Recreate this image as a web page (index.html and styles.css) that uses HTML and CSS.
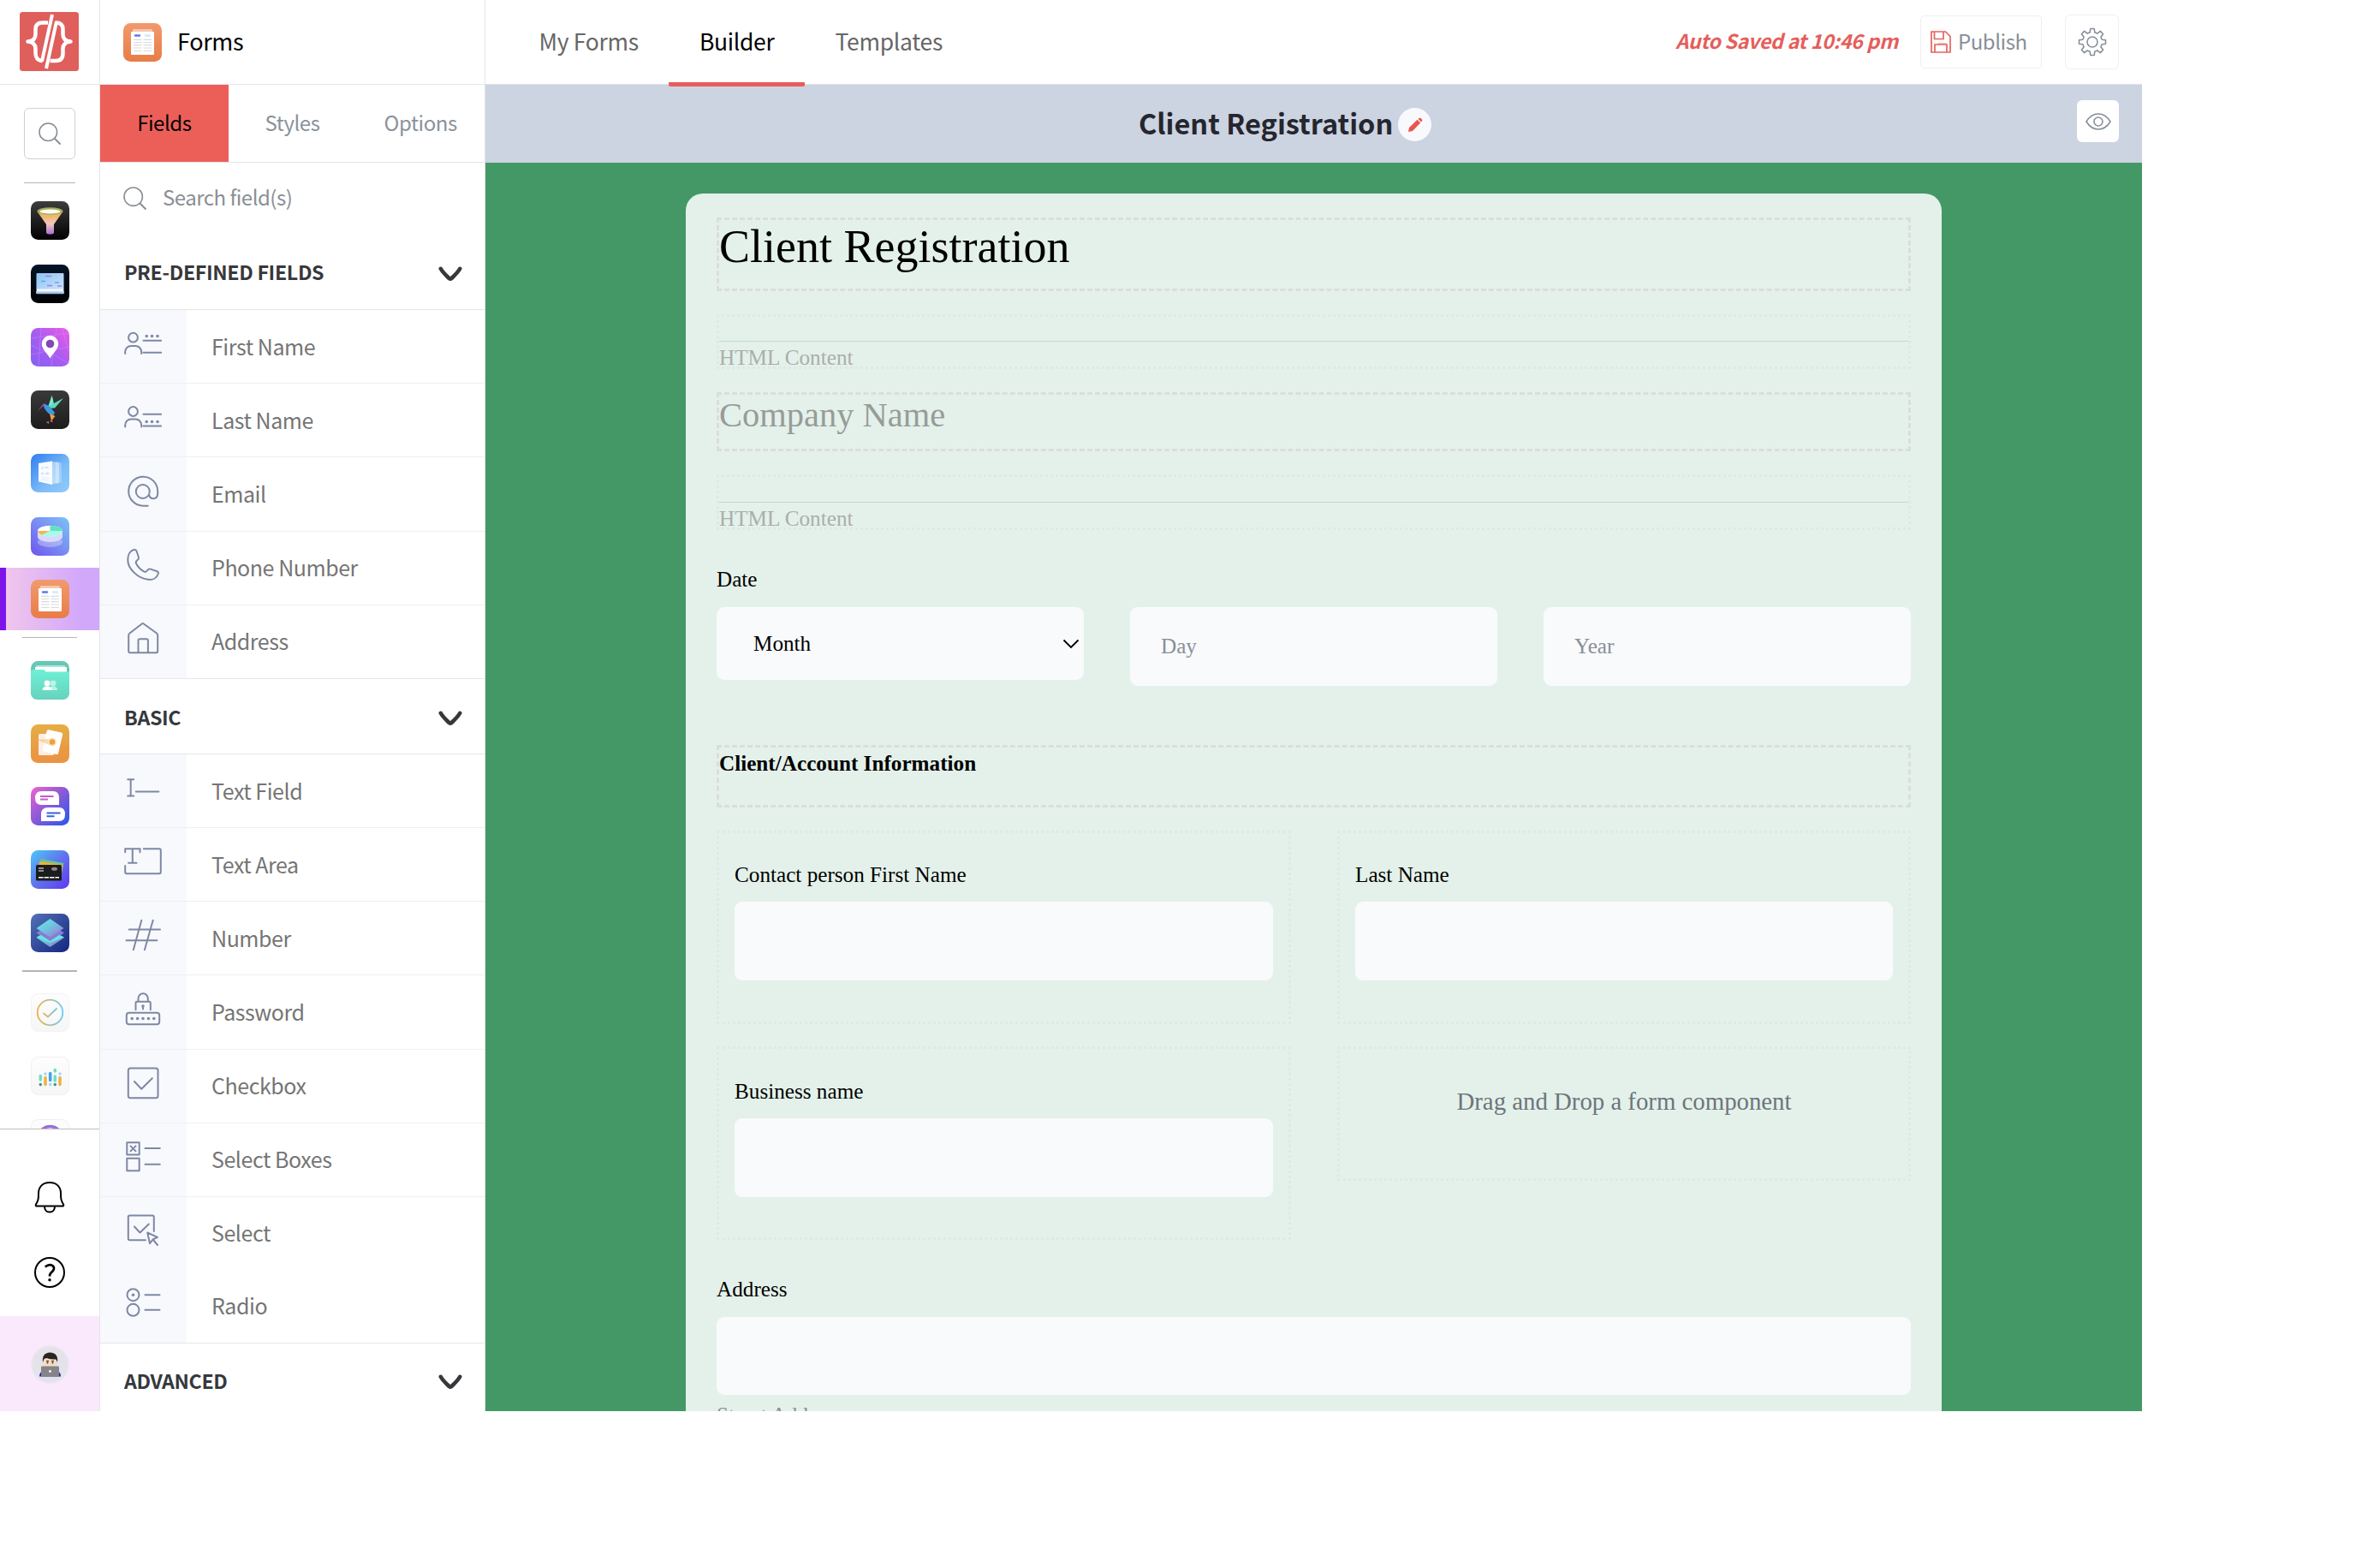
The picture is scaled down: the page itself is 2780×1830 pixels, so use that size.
FILE: index.html
```html
<!DOCTYPE html>
<html lang="en">
<head>
<meta charset="utf-8">
<title>Forms – Builder</title>
<link rel="stylesheet" href="styles.css">
</head>
<body>
<svg class="defs" width="0" height="0" aria-hidden="true">
  <defs>
    <linearGradient id="g-black" x1="0" y1="0" x2="0" y2="1"><stop offset="0" stop-color="#3d3d3d"/><stop offset="1" stop-color="#000"/></linearGradient>
    <linearGradient id="g-funnel" x1="0" y1="0" x2="0" y2="1"><stop offset="0" stop-color="#eab043"/><stop offset=".55" stop-color="#f3c6bd"/><stop offset="1" stop-color="#a86fd6"/></linearGradient>
    <linearGradient id="g-night" x1="0" y1="0" x2="0" y2="1"><stop offset="0" stop-color="#031427"/><stop offset="1" stop-color="#000"/></linearGradient>
    <linearGradient id="g-screen" x1="0" y1="0" x2="1" y2="1"><stop offset="0" stop-color="#8cc4f5"/><stop offset="1" stop-color="#cfe2fa"/></linearGradient>
    <linearGradient id="g-pin" x1="0" y1="1" x2="1" y2="0"><stop offset="0" stop-color="#8560f5"/><stop offset=".5" stop-color="#a95cf0"/><stop offset="1" stop-color="#ef5be6"/></linearGradient>
    <linearGradient id="g-bird" x1="0" y1="0" x2="0" y2="1"><stop offset="0" stop-color="#3a3a3a"/><stop offset="1" stop-color="#1c1c1c"/></linearGradient>
    <linearGradient id="g-doc" x1="0" y1="0" x2="1" y2="1"><stop offset="0" stop-color="#2f7df0"/><stop offset=".6" stop-color="#7cbcf7"/><stop offset="1" stop-color="#90cbfa"/></linearGradient>
    <linearGradient id="g-pie" x1="0" y1="1" x2="1" y2="0"><stop offset="0" stop-color="#6d55ee"/><stop offset=".5" stop-color="#7b8cf2"/><stop offset="1" stop-color="#79c5f7"/></linearGradient>
    <linearGradient id="g-orange" x1="0" y1="0" x2="0" y2="1"><stop offset="0" stop-color="#f19a6e"/><stop offset="1" stop-color="#e87c46"/></linearGradient>
    <linearGradient id="g-mint" x1="0" y1="0" x2="0" y2="1"><stop offset="0" stop-color="#6ff0d6"/><stop offset="1" stop-color="#66d2bd"/></linearGradient>
    <linearGradient id="g-amber" x1="0" y1="0" x2="0" y2="1"><stop offset="0" stop-color="#e5ae45"/><stop offset="1" stop-color="#eb9148"/></linearGradient>
    <linearGradient id="g-chat" x1="0" y1="0" x2="1" y2="1"><stop offset="0" stop-color="#f062d3"/><stop offset=".4" stop-color="#9a5bd6"/><stop offset="1" stop-color="#2358ea"/></linearGradient>
    <linearGradient id="g-wallet" x1="0" y1="0" x2="1" y2="1"><stop offset="0" stop-color="#4fc6f7"/><stop offset=".5" stop-color="#5f74ee"/><stop offset="1" stop-color="#5f38ee"/></linearGradient>
    <linearGradient id="g-navy" x1="0" y1="0" x2="1" y2="1"><stop offset="0" stop-color="#5571b8"/><stop offset="1" stop-color="#13267f"/></linearGradient>
    <linearGradient id="g-layer" x1="0" y1="0" x2="1" y2="1"><stop offset="0" stop-color="#62f0df"/><stop offset=".5" stop-color="#71bfe0"/><stop offset="1" stop-color="#a667d0"/></linearGradient>
    <linearGradient id="g-check" x1="0" y1="0" x2="1" y2="0"><stop offset="0" stop-color="#ecb44a"/><stop offset="1" stop-color="#6ccbf3"/></linearGradient>
    <linearGradient id="g-tile" x1="0" y1="0" x2="0" y2="1"><stop offset="0" stop-color="#fdfdfd"/><stop offset="1" stop-color="#f6f6f6"/></linearGradient>
    <symbol id="i-forms" viewBox="0 0 45 45">
      <rect width="45" height="45" rx="8.5" fill="url(#g-orange)"/>
      <rect x="11" y="7" width="23" height="5" rx="1" fill="#f7c7ae"/>
      <rect x="9" y="10" width="27" height="27" rx="1" fill="#fff"/>
      <path d="M14 14.5h5" stroke="#5b7bea" stroke-width="2.4" stroke-linecap="round"/><path d="M26 14.5h5" stroke="#cdebfb" stroke-width="2.4" stroke-linecap="round"/>
      <path d="M12 19.3h9.5M23.5 19.3h9.5M12 22.5h9.5M23.5 22.5h9.5M12 25.7h9.5M23.5 25.7h9.5M12 29h9.5M23.5 29h9.5M12 32.5h9.5M23.5 32.5h9.5" stroke="#d9dade" stroke-width="1.2"/>
    </symbol>
    <symbol id="i-search" viewBox="0 0 28 28">
      <circle cx="11.7" cy="11.7" r="10.7" fill="none" stroke="currentColor" stroke-width="1.6"/><path d="M19.3 19.3L26.5 26.5" stroke="currentColor" stroke-width="2"/>
    </symbol>
    <symbol id="i-chevron" viewBox="0 0 28 18">
      <path d="M2.800 2.800C5 7 9 10.500 12.500 14Q14 15.200 15.500 14C19 10.500 23 7 25.200 2.800" fill="none" stroke="currentColor" stroke-width="4.600" stroke-linecap="round" stroke-linejoin="round"/>
    </symbol>
  </defs>
</svg>

<div class="app">
  <aside class="rail">
    <div class="rail-logo">
      <svg width="69" height="69" viewBox="0 0 69 69"><rect width="69" height="69" rx="3.5" fill="#df5f5c"/>
        <g fill="none" stroke="#fff" stroke-width="4.5" stroke-linejoin="round"><path d="M33 12.500H27C21 12.500 18.500 15 18.500 20V26C18.500 31 15.500 34 9.500 34.500C15.500 35 18.500 38 18.500 43V48C18.500 53 21 57 26.500 57"/><path d="M42 12.500C48 12.500 50.500 15 50.500 20V26C50.500 31 53.500 34 59.500 34.500C53.500 35 50.500 38 50.500 43V48C50.500 54 48 57 42.500 57H35.500"/><path d="M38 3L26 57.500M43 11L31 66" stroke-width="4"/></g></svg>
    </div>
    <div class="rail-scroll">
      <div class="rail-search"><svg width="27" height="27"><use href="#i-search"/></svg></div>
      <div class="rail-rule"></div>
      <nav class="rail-apps">
        <a class="rail-item"><svg width="45" height="45" viewBox="0 0 45 45"><rect width="45" height="45" rx="8.500" fill="url(#g-black)"/><path d="M7.500 12L18 27v9.500a4.500 2 0 0 0 9 0V27L37.500 12z" fill="url(#g-funnel)"/><ellipse cx="22.500" cy="11.500" rx="15" ry="4.300" fill="#9fae62"/><ellipse cx="22.500" cy="12" rx="12" ry="2.500" fill="#fffbe8"/></svg></a>
        <a class="rail-item"><svg width="45" height="45" viewBox="0 0 45 45"><rect width="45" height="45" rx="8.500" fill="url(#g-night)"/><rect x="6.500" y="10" width="32" height="20" rx="1" fill="url(#g-screen)"/><path d="M17 13.500h7M19 24.500h6M31 25h5" stroke="#9289de" stroke-width="1.400"/><path d="M12 19.500h5M28 21h5" stroke="#55aeea" stroke-width="1.500"/><path d="M7 28.500h31l1 4.500H6z" fill="#f2f6fc"/><rect x="6" y="31.500" width="33" height="2.700" rx="1.200" fill="#a8c4e6"/></svg></a>
        <a class="rail-item"><svg width="45" height="45" viewBox="0 0 45 45"><rect width="45" height="45" rx="8.500" fill="url(#g-pin)"/><path d="M0 12L45 6M12 0L9 45M0 31L45 22M30 0L24 45M22 28L45 42M36 0L45 28M0 20L22 30" stroke="#c68af7" stroke-opacity=".55" fill="none"/><path d="M22.500 35.500C18 28 12.800 24.500 12.800 18.500a9.700 9.700 0 0 1 19.400 0C32.200 24.500 27 28 22.500 35.500z" fill="#fff"/><circle cx="22.500" cy="18.500" r="4.800" fill="#8247b8"/></svg></a>
        <a class="rail-item"><svg width="45" height="45" viewBox="0 0 45 45"><rect width="45" height="45" rx="8.500" fill="url(#g-bird)"/><path d="M24.500 5.500L27 15L38 9L28 20.500L19.500 21z" fill="#5fd9bd"/><path d="M26 14L20 20.500L25 7z" fill="#7fe8d0"/><path d="M8 24L13 17.500Q16 13.500 18.500 17L14 18.500z" fill="#9e4fb5"/><path d="M15 17Q20 15.500 24 21L28 26L26.500 29Q20 28.500 15.500 20z" fill="#3d9ae0"/><path d="M22 27L28.500 30L24 35.500z" fill="#f4a13c"/><path d="M22 36l3-2 .5 3zM18 37l3-1v3z" fill="#ee6668"/></svg></a>
        <a class="rail-item"><svg width="45" height="45" viewBox="0 0 45 45"><rect width="45" height="45" rx="8.500" fill="url(#g-doc)"/><path d="M29 9.500l7 1v23l-7 1.500z" fill="#fff" opacity=".25"/><path d="M24 9l9 1v24l-9 1.500z" fill="#fff" opacity=".45"/><path d="M9 11L25 8.500V36L9 32.500z" fill="#f8fbff"/><path d="M12 16.500h3M16.500 16h4M12 23h3M17 23h4" stroke="#cfe2f8" stroke-width="2.200"/><path d="M12 27.500l9 1M12 30l9 1" stroke="#e4eefa"/></svg></a>
        <a class="rail-item"><svg width="45" height="45" viewBox="0 0 45 45"><rect width="45" height="45" rx="8.500" fill="url(#g-pie)"/><path d="M8 27v2a14.500 6 0 0 0 29 0v-2z" fill="#fff" opacity=".3"/><path d="M8 18v5a14.500 6 0 0 0 29 0v-5z" fill="#d9dafb"/><ellipse cx="22.500" cy="16" rx="14.500" ry="6.300" fill="#fff"/><path d="M22.500 16V9.700A14.500 6.300 0 0 1 37 16z" fill="#64e0bf"/><path d="M22.500 16H37A14.500 6.300 0 0 1 13 20.700z" fill="#a5fbe9"/><path d="M22.500 16H8Q8.500 19 13 20.700z" fill="#eabb55"/></svg></a>
        <a class="rail-item rail-item-active"><svg width="45" height="45"><use href="#i-forms"/></svg></a>
      </nav>
      <div class="rail-rule rail-rule-wide"></div>
      <nav class="rail-apps">
        <a class="rail-item"><svg width="45" height="45" viewBox="0 0 45 45"><rect width="45" height="45" rx="8.500" fill="#68c6b4"/><path d="M6 5h34v8H6z" fill="#aee6da"/><path d="M5 8q0-1 1-1h36v7H5z" fill="#fff"/><path d="M0 13q0-3 3-3h11q3 0 3 2.500h28v24q0 8.500-8.500 8.500h-28Q0 45 0 36.500z" fill="url(#g-mint)"/><g fill="#b9f4e8"><circle cx="26" cy="26" r="3.400"/><path d="M21 34q0-4.500 5-4.500t5 4.500z"/></g><g fill="#fff"><circle cx="19" cy="26" r="3.400"/><path d="M13.500 34q0-4.500 5.500-4.500t5.500 4.500z"/></g></svg></a>
        <a class="rail-item"><svg width="45" height="45" viewBox="0 0 45 45"><rect width="45" height="45" rx="8.500" fill="url(#g-amber)"/><path d="M0 30h20V24h25v12.500q0 8.500-8.500 8.500h-28Q0 45 0 36.500z" fill="#ea963f" opacity=".45"/><rect x="9" y="11" width="18" height="25" rx="1.500" fill="#fdeee2"/><rect x="16" y="7.500" width="19" height="26" rx="2" transform="rotate(13 25 20)" fill="#fff"/><path d="M6 17.500L24 17v8z" fill="#f2b866" opacity=".5"/><circle cx="25" cy="20.500" r="5" fill="#fbe3c4"/><circle cx="25" cy="20.500" r="3.300" fill="#e9a534"/></svg></a>
        <a class="rail-item"><svg width="45" height="45" viewBox="0 0 45 45"><rect width="45" height="45" rx="8.500" fill="url(#g-chat)"/><path d="M12.500 5H26q7 0 7 8v8H12.500Q5 21 5 13T12.500 5z" fill="#fff"/><path d="M20 24h13q7 0 7 8t-7 8H12v-8q0-8 8-8z" fill="#fff"/><path d="M11 11h15.500M11 14.500h9" stroke="#c95acb" stroke-width="2"/><path d="M18.500 30.500h16M18.500 34.300h9" stroke="#3a61e0" stroke-width="2"/></svg></a>
        <a class="rail-item"><svg width="45" height="45" viewBox="0 0 45 45"><rect width="45" height="45" rx="8.500" fill="url(#g-wallet)"/><path d="M12 10L38.500 15L34 34L8 26z" fill="#6fc48e"/><path d="M10 13L37.500 17L35 34L8 27z" fill="#e8b23e"/><rect x="6" y="17" width="30" height="18.500" rx="1.500" fill="#1b1c1e"/><path d="M9 21h6M9 24h6" stroke="#fff" stroke-width="1.200"/><ellipse cx="27.500" cy="21.700" rx="3.500" ry="2" fill="#8a8a8a"/><path d="M9 31.700h24" stroke="#fff" stroke-width="1.500" stroke-dasharray="5.500 1"/></svg></a>
        <a class="rail-item"><svg width="45" height="45" viewBox="0 0 45 45"><rect width="45" height="45" rx="8.500" fill="url(#g-navy)"/><path d="M22.500 17L39 28L22.500 39L6.500 28z" fill="url(#g-layer)"/><path d="M22.500 11.500L39 22.500L22.500 33.500L6.500 22.500z" fill="#8a7bd4"/><path d="M6.500 27.500L12 25l10.500 7L33 25l6 2.500L22.500 34z" fill="#63e8de"/><path d="M22.500 6L38.500 17L22.500 27.500L6.500 17z" fill="url(#g-layer)"/></svg></a>
      </nav>
      <div class="rail-rule rail-rule-wide rail-rule-thick"></div>
      <nav class="rail-apps">
        <a class="rail-item"><svg width="45" height="45" viewBox="0 0 45 45"><rect x=".5" y=".5" width="44" height="44" rx="8" fill="url(#g-tile)" stroke="#f3f3f3"/><circle cx="22.500" cy="22.500" r="14.800" fill="none" stroke="url(#g-check)" stroke-width="1.800"/><path d="M14.500 23L20 27.500L30.500 17.500" fill="none" stroke="url(#g-check)" stroke-width="1.800"/></svg></a>
        <a class="rail-item"><svg width="45" height="45" viewBox="0 0 45 45"><rect x=".5" y=".5" width="44" height="44" rx="8" fill="url(#g-tile)" stroke="#f0f0f0"/><g fill="none" stroke-width="3.600" stroke-linecap="round"><path d="M11.300 22.500v4.500M28.300 15.500v1.500M28.300 23v5" stroke="#72dcc6"/><path d="M17 24.500v8M34 24.500v8" stroke="#ecb34b"/><path d="M22.700 19.500v8" stroke="#4aa1ea"/><path d="M11.300 32.500v.1M28.300 32.500v.1" stroke="#3f9c84"/><path d="M22.700 32.500v.1M17 20v.1M34 20v.1" stroke="#a4d8f8"/></g></svg></a>
        <a class="rail-item"><svg width="45" height="45" viewBox="0 0 45 45"><rect x=".5" y=".5" width="44" height="44" rx="8" fill="url(#g-tile)" stroke="#f0f0f0"/><circle cx="22.500" cy="22.500" r="14" fill="none" stroke="#9670d6" stroke-width="3.500"/></svg></a>
      </nav>
    </div>
    <div class="rail-tools">
      <svg width="36" height="38" viewBox="0 0 36 38" fill="none" stroke="#000" stroke-width="2" stroke-linejoin="round"><path d="M18 2C9.500 2 5 7.500 5 14.500C5 20 5 23 1.800 27.800Q1.500 29.500 3 29.500H33Q34.500 29.500 34.200 27.800C31 23 31 20 31 14.500C31 7.500 26.500 2 18 2z"/><path d="M12 30C12 34 14.500 36.500 18 36.500S24 34 24 30"/></svg>
      <svg width="38" height="38" viewBox="0 0 38 38" fill="none" stroke="#000" stroke-width="2"><circle cx="19" cy="19" r="17"/><path d="M13.700 12.500Q19 8.500 23 11.500Q26 15 20.500 19.500Q19 21 19 23.500" stroke-width="2.700"/><circle cx="19" cy="27.800" r="1" fill="#000" stroke-width="1.500"/></svg>
    </div>
    <div class="rail-user">
      <svg width="45" height="45" viewBox="0 0 45 45"><circle cx="22.500" cy="22.500" r="21.800" fill="#e5e3ea" stroke="#ece8f2" stroke-width="1.400"/><path d="M10 36.500q0-6 5-6h15q5 0 5 6z" fill="#2b21a8"/><path d="M15 15h15v9q0 5-7.500 5T15 24z" fill="#f6dcc3"/><path d="M14 20q-1.500-11 8.500-11.500q10 .5 8.500 11.500l-1.500-3.500q-7 0-11-1.500l-3 1z" fill="#2a2522"/><path d="M18 18.500h3M24 18.500h3" stroke="#2a2522" stroke-width="1"/><circle cx="19.500" cy="20.500" r="1" fill="#40231a"/><circle cx="25.500" cy="20.500" r="1" fill="#40231a"/><rect x="12" y="24.500" width="21" height="12" rx="1" fill="#858489"/><circle cx="22.500" cy="30.500" r="1.400" fill="#fff"/></svg>
    </div>
  </aside>

  <aside class="panel">
    <div class="panel-brand"><svg width="45" height="45"><use href="#i-forms"/></svg><span class="brand-name">Forms</span></div>
    <div class="panel-tabs"><a class="tab tab-active">Fields</a><a class="tab">Styles</a><a class="tab">Options</a></div>
    <label class="panel-search"><svg width="28" height="28"><use href="#i-search"/></svg><span>Search field(s)</span></label>
    <div class="group-head group-head-first"><span>PRE-DEFINED FIELDS</span><svg width="28" height="18"><use href="#i-chevron"/></svg></div>
    <ul class="group group-predefined">
      <li><i><svg viewBox="0 0 44 44"><circle cx="10.500" cy="14.200" r="5.400"/><path d="M1.200 33v-2a7 7 0 0 1 7-7h5a7 7 0 0 1 7 7v2M22.500 17.800h20.700M22.500 31.800h20.700"/><path class="dots" d="M26.200 12.500h.01M32.500 12.500h.01M39 12.500h.01"/></svg></i><span>First Name</span></li>
      <li><i><svg viewBox="0 0 44 44"><circle cx="10.500" cy="14.500" r="5.400"/><path d="M1.200 32.500v-2a7 7 0 0 1 7-7h5a7 7 0 0 1 7 7v2M22.500 17.800h20.700M22.500 31.500h20.700"/><path class="dots" d="M26.200 26.500h.01M32.500 26.500h.01M39 26.500h.01"/></svg></i><span>Last Name</span></li>
      <li><i><svg viewBox="0 0 44 44"><circle cx="21.800" cy="22" r="8"/><path d="M27.800 38.700H22A17 17 0 1 1 39.200 22V24.500C39.200 31.500 30.500 32 29.300 26.300"/></svg></i><span>Email</span></li>
      <li><i><svg viewBox="0 0 44 44"><path d="M10.500 4.200Q13.800 3.400 14.500 5.500L17 13Q17.500 14.500 15.500 16Q13 18 14 20C16.500 25 19.500 27.500 23.500 29.600Q25.500 30.500 27 28.200Q28.500 25.800 31 26.600L38.500 29.200Q40.500 30.200 39.800 32C38 37.500 33 39.500 28 38.800C16 37.500 4 26 4.300 15.500C4.300 10 7 5.500 10.500 4.200z"/></svg></i><span>Phone Number</span></li>
      <li><i><svg viewBox="0 0 44 44"><path d="M6.500 15.500L20.800 4.500Q21.800 3.600 22.800 4.500L38 15.500Q39.200 16.500 39.200 18V36.500Q39.200 38.200 37.500 38.200H7Q5.200 38.200 5.200 36.500V18Q5.200 16.500 6.500 15.500zM16.500 38V24Q16.500 22.200 18.200 22.200H26.200Q27.900 22.200 27.900 24V38"/></svg></i><span>Address</span></li>
    </ul>
    <div class="group-head"><span>BASIC</span><svg width="28" height="18"><use href="#i-chevron"/></svg></div>
    <ul class="group group-basic">
      <li><i><svg viewBox="0 0 44 44"><path d="M4.200 11.200h7M4.200 30.500h7M7.700 11.200v19.300M13.800 25.500h26.500"/></svg></i><span>Text Field</span></li>
      <li><i><svg viewBox="0 0 44 44"><path d="M1.200 10.200v-4h17.300v4M9.800 6.200v16.600M5 22.800h9.500M22.800 6.200H41Q42.800 6.200 42.800 8V33.500Q42.800 35.200 41 35.200H3Q1.200 35.200 1.200 33.500V26"/></svg></i><span>Text Area</span></li>
      <li><i><svg viewBox="0 0 44 44"><path d="M5.800 14.500h36.200M2.500 27.200h36M20.300 3.800L10.800 38.200M33.700 3.800L23.900 38.200"/></svg></i><span>Number</span></li>
      <li><i><svg viewBox="0 0 44 44"><path d="M16.500 12.800V9a5.600 5.600 0 0 1 11.300 0v3.800M13.500 22.200v-8q0-1.400 1.400-1.400h14.500q1.400 0 1.400 1.400v8M22 18v3.500"/><rect x="2.800" y="25.800" width="38.400" height="13.400" rx="3"/><path class="dots" d="M22 18h.01M9.200 32.500h.01M15.600 32.500h.01M22 32.500h.01M28.400 32.500h.01M34.800 32.500h.01"/></svg></i><span>Password</span></li>
      <li><i><svg viewBox="0 0 44 44"><rect x="4.800" y="4.500" width="34.700" height="34.700" rx="2.500"/><path d="M12 20l8.200 8.800L32.800 16.200"/></svg></i><span>Checkbox</span></li>
      <li><i><svg viewBox="0 0 44 44"><path d="M3.300 5.200h14.400v14.400H3.300zM3.300 23.800h14.400v14.400H3.300zM7.500 9.400l6 6M13.500 9.400l-6 6M24.500 12h17.300M24.500 30.700h17.300"/></svg></i><span>Select Boxes</span></li>
      <li class="plain"><i><svg viewBox="0 0 44 44"><path d="M25 33.200H6.500Q4.800 33.200 4.800 31.500V6.200Q4.800 4.500 6.500 4.500H33Q34.800 4.500 34.800 6.200V23M12 17.500l6.500 7L28.800 14.500M27.200 24.500L39 29.800L33.500 32.500L30 37.200zM34 33L39 39"/></svg></i><span>Select</span></li>
      <li class="plain"><i><svg viewBox="0 0 44 44"><circle cx="10.500" cy="12.200" r="7"/><circle cx="10.500" cy="29.800" r="7"/><path d="M24.500 12.200h17M24.500 29.800h17"/><path class="dots" d="M10.500 12.200h.01"/></svg></i><span>Radio</span></li>
    </ul>
    <div class="group-head group-head-last"><span>ADVANCED</span><svg width="28" height="18"><use href="#i-chevron"/></svg></div>
  </aside>

  <main class="main">
    <header class="topbar">
      <nav class="topnav"><a>My Forms</a><a class="current">Builder</a><a>Templates</a></nav>
      <div class="actions">
        <span class="saved">Auto Saved at 10:46 pm</span>
        <button class="publish"><svg width="24" height="26" viewBox="0 0 24 26" fill="none" stroke="#e8635f" stroke-width="1.700"><path d="M1 1h16.500L23 6.500V25H1zM4.500 1v8.500H15V1M5 25v-9h14v9"/><path d="M8.500 14.800h10" stroke-opacity=".4"/></svg><span>Publish</span></button>
        <button class="gear"><svg width="34" height="34" viewBox="0 0 34 34" fill="none" stroke="#878f99" stroke-width="1.600" stroke-linejoin="round"><circle cx="17" cy="17" r="6"/><path d="M14.800 1.500h4.400l.6 4.300 3 1.300 3.500-2.700 3.300 3.300-2.700 3.500 1.300 3 4.300.6v4.400l-4.300.6-1.300 3 2.700 3.500-3.300 3.300-3.500-2.700-3 1.300-.6 4.300h-4.400l-.6-4.300-3-1.300-3.500 2.700-3.300-3.300 2.700-3.500-1.300-3-4.300-.6v-4.400l4.300-.6 1.300-3-2.700-3.500 3.300-3.300 3.500 2.700 3-1.300z"/></svg></button>
      </div>
    </header>
    <div class="titlebar">
      <h1>Client Registration</h1>
      <span class="edit"><svg width="18" height="18" viewBox="0 0 18 18" fill="#e9564f"><path d="M1 17l1-5L11.500 2.800l3.700 3.700L6 16zM12.500 2l1-1q1-.8 2 0l1.500 1.500q.8 1 0 2l-1 1z"/></svg></span>
      <button class="preview"><svg width="30" height="20" viewBox="0 0 30 20" fill="none" stroke="#878f99" stroke-width="1.600"><path d="M1 10Q6.500 1 15 1T29 10Q23.500 19 15 19T1 10z"/><circle cx="15" cy="10" r="5"/></svg></button>
    </div>
    <div class="canvas">
      <form class="card">
        <div class="slot slot-title">Client Registration</div>
        <div class="html-slot html-slot-a"><hr>HTML Content</div>
        <div class="slot slot-company">Company Name</div>
        <div class="html-slot html-slot-b"><hr>HTML Content</div>
        <div class="label label-date">Date</div>
        <div class="date-row">
          <div class="select"><span>Month</span><svg width="20" height="12" viewBox="0 0 20 12" fill="none" stroke="#000" stroke-width="1.800"><path d="M1.500 1.500L10 10L18.500 1.500"/></svg></div>
          <div class="input">Day</div>
          <div class="input">Year</div>
        </div>
        <div class="slot slot-section">Client/Account Information</div>
        <div class="columns">
          <div class="cell"><div class="label">Contact person First Name</div><div class="input"></div></div>
          <div class="cell"><div class="label">Last Name</div><div class="input"></div></div>
        </div>
        <div class="columns columns-second">
          <div class="cell"><div class="label">Business name</div><div class="input"></div></div>
          <div class="drop">Drag and Drop a form component</div>
        </div>
        <div class="label label-address">Address</div>
        <div class="input input-address"></div>
        <div class="hint">Street Address</div>
      </form>
    </div>
  </main>
</div>
</body>
</html>
```
FILE: styles.css
```css
* { box-sizing: border-box; }
body { margin: 0; background: #fff; font-family: "Noto Sans CJK SC", "Noto Sans", sans-serif; }
.defs { position: absolute; }
svg { display: block; flex: none; }
button { margin: 0; padding: 0; background: #fff; font: inherit; letter-spacing: inherit; }

.app { display: flex; width: 2502px; height: 1648px; overflow: hidden; }

/* icon rail */
.rail { display: flex; flex-direction: column; width: 117px; border-right: 1px solid #e6e6e8; }
.rail-logo { height: 99px; padding: 14px 0 0 23px; border-bottom: 1px solid #e6e6e8; }
.rail-scroll { height: 1220px; padding-top: 27px; overflow: hidden; border-bottom: 1px solid #bfbfbf; }
.rail-search { display: flex; align-items: center; justify-content: center; width: 60px; height: 60px; margin-left: 28px; border: 1px solid #cfd0d3; border-radius: 6px; color: #858c94; }
.rail-rule { width: 60px; height: 1px; margin: 27px 0 6.6px 28px; background: #b5b5b5; }
.rail-rule-wide { width: 64px; margin: 8px 0 12px 26px; }
.rail-rule-thick { height: 2px; margin: 7px 0 10px 26px; }
.rail-apps { display: flex; flex-direction: column; }
.rail-item { display: flex; align-items: center; height: 73.8px; padding-left: 36px; }
.rail-item-active { height: 73px; padding-left: 29px; border-left: 7px solid #7d14ea; background: linear-gradient(90deg, #f0c6ec, #d2a8fb 80%); }
.rail-tools { display: flex; flex-direction: column; align-items: center; gap: 50px; height: 218px; padding-top: 60px; }
.rail-user { flex: 1; padding: 34px 0 0 36px; background: #fae8fc; }

/* field palette */
.panel { display: flex; flex-direction: column; width: 450px; border-right: 1px solid #e6e6e8; }
.panel-brand { display: flex; flex: none; align-items: center; gap: 18px; height: 99px; padding-left: 27px; border-bottom: 1px solid #e6e6e8; }
.brand-name { padding-bottom: 3px; font-size: 27px; letter-spacing: -.35px; color: #000; }
.panel-tabs { display: flex; flex: none; height: 91px; border-bottom: 1px solid #e6e6e8; font-size: 24px; letter-spacing: -.45px; color: #8a929b; }
.tab { display: flex; flex: 1; align-items: center; justify-content: center; padding-bottom: 3px; }
.tab-active { background: #ec5f59; color: #000; }
.panel-search { display: flex; flex: none; align-items: center; gap: 18px; height: 83px; padding-left: 27px; font-size: 24px; letter-spacing: -.5px; color: #8a8f95; }
.panel-search span { padding-bottom: 4px; }
.group-head { display: flex; flex: none; align-items: center; justify-content: space-between; height: 88px; padding: 0 26px 0 28px; border-bottom: 1px solid #e6e6e8; font-size: 23.2px; font-weight: 700; letter-spacing: -.35px; color: #36383c; }
.group-head svg { margin-top: 5px; }
.group-head-first { height: 89px; }
.group-head-last { height: 85px; border: 0; }
.group { display: flex; flex: none; flex-direction: column; margin: 0; padding: 0; list-style: none; border-bottom: 1px solid #e6e6e8; font-size: 25px; letter-spacing: -.45px; color: #757575; }
.group-predefined { height: 431px; }
.group-basic { height: 688px; }
.group li { display: flex; flex: 1; align-items: stretch; border-bottom: 1px solid #eef0f4; }
.group li:last-child, .group .plain { border-bottom: 0; }
.group li > span { align-self: center; margin-left: 29px; padding-bottom: 2px; }
.group i { display: flex; align-items: center; justify-content: center; width: 101px; padding: 0 1px 6px 0; background: #f7f9fd; }
.group svg { width: 44px; height: 44px; fill: none; stroke: #7f88a3; stroke-width: 2; stroke-linecap: round; stroke-linejoin: round; }
.group .dots { stroke-width: 3.6; }

/* top bar */
.main { flex: 1; display: flex; flex-direction: column; min-width: 0; }
.topbar { display: flex; flex: none; justify-content: space-between; height: 99px; border-bottom: 1px solid #e0e3e6; font-size: 26.5px; letter-spacing: -.3px; color: #666; }
.topnav { display: flex; padding-left: 27px; }
.topnav a { display: flex; align-items: center; height: 101px; padding: 0 35.5px 1px; border-bottom: 5px solid transparent; border-radius: 2px; z-index: 1; }
.topnav .current { border-color: #e55e5b; color: #000; }
.actions { display: flex; align-items: center; padding-right: 27px; }
.saved { padding-bottom: 4px; font-size: 23.2px; font-weight: 700; font-style: italic; letter-spacing: -.32px; color: #e55e5b; }
.publish { display: flex; align-items: center; gap: 8px; width: 142px; height: 62px; margin: 0 27px 0 26px; padding-left: 11px; border: 1px solid #efeff1; border-radius: 5px; font-size: 24px; letter-spacing: -.45px; color: #878f99; }
.publish span { padding-bottom: 3px; }
.gear { display: flex; align-items: center; justify-content: center; width: 63px; height: 64px; border: 1px solid #efeff1; border-radius: 6px; }
.titlebar { display: flex; flex: none; align-items: center; gap: 6px; height: 91px; padding-left: 763px; background: #ccd3e1; }
.titlebar h1 { margin: 0; padding-bottom: 4px; font-size: 32.5px; line-height: 40px; color: #25262d; }
.edit { display: flex; align-items: center; justify-content: center; width: 39px; height: 39px; margin-top: 2px; border-radius: 50%; background: #f8f9fd; }
.preview { display: flex; align-items: center; justify-content: center; width: 49px; height: 49px; margin: 0 27px 6px auto; border: 0; border-radius: 6px; }

/* form canvas */
.canvas { flex: 1; min-height: 0; padding: 36px 0 0 234px; overflow: hidden; background: #449866; }
.card { width: 1467px; height: 1500px; padding: 28px 36px 0; border-radius: 20px; background: #e4f1ea; font-family: "Liberation Serif", serif; font-size: 25.2px; line-height: 30px; color: #000; }
.slot { border: 3px dashed #dadedb; }
.slot-title { height: 86px; font-size: 54px; line-height: 63px; }
.slot-company { height: 69px; margin-top: 27px; font-size: 40.5px; line-height: 47px; color: #979c99; }
.slot-section { height: 73px; margin-top: 69px; font-weight: 700; line-height: 38px; }
.html-slot { height: 65px; border: 3px dotted #e0e8e3; color: #a9afab; }
.html-slot hr { height: 1px; margin: 28px 0 4px; border: 0; background: #c1d9ce; }
.html-slot-a { height: 64px; margin-top: 27px; }
.html-slot-b { margin-top: 27px; }
.html-slot-b hr { margin-top: 29px; }
.label { height: 30px; }
.label-date { margin-top: 43px; }
.date-row { display: grid; grid-template-columns: repeat(3, 429px); justify-content: space-between; align-items: start; margin-top: 17px; }
.input, .select { display: flex; align-items: center; height: 92px; padding: 0 36px; border-radius: 9px; background: #f9fafc; color: #888f96; }
.select { justify-content: space-between; height: 85px; padding: 0 5px 0 43px; color: #000; }
.columns { display: grid; grid-template-columns: 671px 670px; justify-content: space-between; align-items: start; margin-top: 27px; }
.cell { height: 226px; padding: 34px 18px 0; border: 3px dotted #e0e8e3; }
.cell .input { margin-top: 16px; }
.columns-second { margin-top: 26px; }
.columns-second .cell { padding-top: 35px; }
.drop { height: 157px; padding-top: 46px; border: 3px dotted #e0e8e3; text-align: center; font-size: 28.8px; color: #6c757d; }
.label-address { margin-top: 43px; }
.input-address { height: 91px; margin-top: 17px; }
.hint { margin-top: 9px; font-size: 25.2px; color: #888f96; }
```
